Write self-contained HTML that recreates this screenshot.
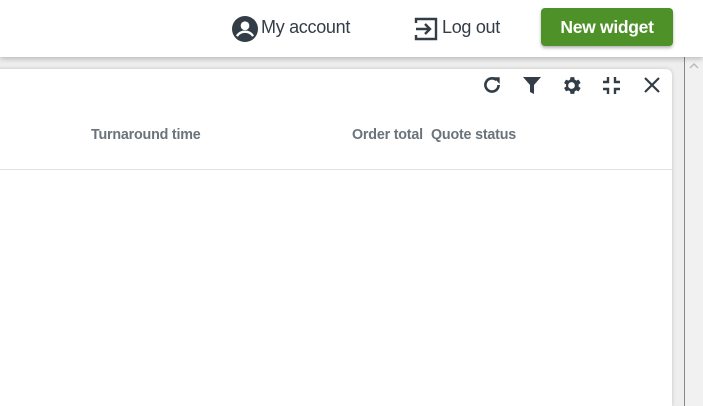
<!DOCTYPE html>
<html style="width:703px;height:406px;overflow:hidden"><head><style>
*{margin:0;padding:0;box-sizing:border-box}
body{width:703px;height:406px;overflow:hidden;background:#eeeeee;font-family:"Liberation Sans",Arial,sans-serif;position:relative}
.top{position:absolute;left:0;top:0;width:703px;height:57px;background:#fff;box-shadow:0 2px 5px rgba(0,0,0,.22);z-index:2}
.t{position:absolute;font-size:18px;color:#333d47;top:17px;letter-spacing:-0.3px}
.btn{position:absolute;left:541px;top:8px;width:132px;height:38px;background:#4e9129;border-radius:4px;color:#fff;font-size:17.5px;font-weight:bold;text-align:center;line-height:38px;box-shadow:0 2px 3px rgba(0,0,0,.3);letter-spacing:-0.3px}
.card{position:absolute;left:-10px;top:69px;width:682px;height:337px;background:#fff;border-radius:6px 6px 0 0;box-shadow:0 0 4px rgba(0,0,0,.18)}
.h{position:absolute;top:127px;font-size:14.3px;font-weight:bold;color:#6b737b;letter-spacing:-0.2px}
.div{position:absolute;left:0;top:169px;width:672px;height:1px;background:#e0e0e0}
.sb{position:absolute;left:684px;top:57px;width:19px;height:349px;background:#f1f1f1;border-left:1px solid #888}
svg.i{position:absolute}
</style></head><body>
<div class="top">
<svg class="i" style="left:232px;top:16px" width="26" height="26" viewBox="0 0 24 24"><circle cx="12" cy="12" r="12" fill="#333d47"/><circle cx="12" cy="9" r="4" fill="#fff"/><path d="M4.5 18.5c2-3 4.5-4 7.5-4s5.5 1 7.5 4" stroke="#fff" stroke-width="2.2" fill="none"/></svg>
<div class="t" style="left:261px">My account</div>
<svg class="i" style="left:414px;top:17px" width="26" height="24" viewBox="0 0 26 24"><path d="M2 6V2h20v20H2v-4" stroke="#333d47" stroke-width="2.4" fill="none"/><path d="M2 12h14M11 7l5 5-5 5" stroke="#333d47" stroke-width="2.4" fill="none"/></svg>
<div class="t" style="left:442px">Log out</div>
<div class="btn">New widget</div>
</div>
<div class="card"></div>
<div class="div"></div>
<div class="h" style="left:91px">Turnaround time</div>
<div class="h" style="left:352px">Order total</div>
<div class="h" style="left:431px">Quote status</div>
<svg class="i" style="left:481px;top:74px" width="22" height="22" viewBox="0 0 20 20"><path d="M16 10a6 6 0 1 1-2-4.5" stroke="#333d47" stroke-width="2.4" fill="none"/><path d="M11 3h6v6z" fill="#333d47"/></svg>
<svg class="i" style="left:522px;top:76px" width="20" height="19" viewBox="0 0 20 19"><path d="M1 1h18l-7 8v9l-4-2V9z" fill="#333d47"/></svg>
<svg class="i" style="left:560px;top:74px" width="23" height="23" viewBox="0 0 24 24"><path fill="#333d47" d="M19.4 13a7.5 7.5 0 0 0 0-2l2.1-1.6-2-3.5-2.5 1a7.5 7.5 0 0 0-1.7-1l-.4-2.6h-4l-.4 2.6a7.5 7.5 0 0 0-1.7 1l-2.5-1-2 3.5L6.4 11a7.5 7.5 0 0 0 0 2l-2.1 1.6 2 3.5 2.5-1a7.5 7.5 0 0 0 1.7 1l.4 2.6h4l.4-2.6a7.5 7.5 0 0 0 1.7-1l2.5 1 2-3.5zM12 15.5a3.5 3.5 0 1 1 0-7 3.5 3.5 0 0 1 0 7z"/></svg>
<svg class="i" style="left:602px;top:76px" width="19" height="19" viewBox="0 0 19 19"><path d="M6 1v5H1M13 1v5h5M6 18v-5H1M13 18v-5h5" stroke="#333d47" stroke-width="2.4" fill="none"/></svg>
<svg class="i" style="left:643px;top:76px" width="18" height="18" viewBox="0 0 18 18"><path d="M2 2l14 14M16 2L2 16" stroke="#333d47" stroke-width="2.2"/></svg>
<div class="sb"><svg style="position:absolute;left:4px;top:6px" width="10" height="6" viewBox="0 0 10 6"><path d="M1 5l4-4 4 4" stroke="#bbb" stroke-width="1.5" fill="none"/></svg></div>
</body></html>
